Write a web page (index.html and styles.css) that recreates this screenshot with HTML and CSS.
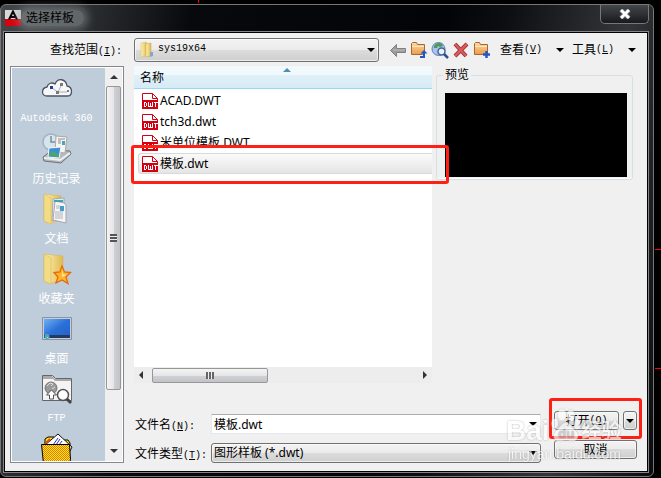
FILE: index.html
```html
<!DOCTYPE html>
<html lang="zh-CN">
    <head>
        <meta charset="utf-8">
        <meta name="viewport" content="width=device-width">
        <title>选择样板</title>
        <link rel="stylesheet" href="styles.css">
    </head>
    <body>
        <svg class="defs" width="0" height="0">
            <defs>
                <linearGradient id="yellow" x1="0" x2="1"><stop offset="0" stop-color="#fdf3b4"/><stop offset="1" stop-color="#dfb850"/></linearGradient>
                <linearGradient id="orange" x1="0" x2="0" y1="0" y2="1"><stop offset="0" stop-color="#ffd9a4"/><stop offset="1" stop-color="#e99b4b"/></linearGradient>
                <linearGradient id="sky" x1="0" x2="1" y1="0" y2="1"><stop offset="0" stop-color="#6fb0f4"/><stop offset=".5" stop-color="#2a70d8"/><stop offset="1" stop-color="#2360c8"/></linearGradient>
                <pattern id="check" width="2" height="2" patternUnits="userSpaceOnUse"><rect width="2" height="2" fill="#ffe81a"/><path d="M0 0h1v1H0zM1 1h1v1H1z" fill="#e07a00"/></pattern>
                <symbol id="dwt" viewBox="0 0 16 16">
                    <path d="M.5 8V.5h10l5 5V8" fill="#fff" stroke="#d4000f"/>
                    <path d="M10.500.5v5h5" fill="none" stroke="#d4000f"/>
                    <path d="M0 7h16v9H0z" fill="#d4000f"/>
                    <path d="M2.500 9v5M2 9.500h2M2 13.500h2M4.500 10v3M6.500 9v5M8.500 10v4M10.500 9v5M6 13.500h5M12 9.500h4M13.500 9v5" fill="none" stroke="#fff"/>
                </symbol>
                <symbol id="folder-up" viewBox="0 0 18 18">
                    <path d="M1.500 13.500v-11l1-1h4l1 2h7v10z" fill="url(#orange)" stroke="#a8682a"/>
                    <path d="M2 5.500h12" stroke="#ffe6c4"/>
                </symbol>
            </defs>
        </svg>
        <div class="dialog">
            <div class="title-bar">
                <svg class="app-icon" width="16" height="16" viewBox="0 0 16 16"><path d="M0 0h16v9H0z" fill="#d8d8d8"/><path d="M0 9h16v7H0z" fill="#d9000d"/><path d="M4 9.500L8 1.500l4 8M5.500 7h5" fill="none" stroke="#000" stroke-width="2"/></svg>
                <h1>选择样板</h1>
                <button class="close" aria-label="关闭"><svg width="12" height="10" viewBox="0 0 12 10"><path d="M2 1l8 8M10 1L2 9" stroke="#596070" stroke-width="5"/><path d="M2 1l8 8M10 1L2 9" stroke="#fff" stroke-width="3"/></svg></button>
            </div>
            <div class="client">
                <div class="toolbar">
                    <label for="look_in">查找范围<span class="lat">(<u>I</u>):</span></label>
                    <div class="look-in">
                        <svg width="16" height="18" viewBox="0 0 16 18"><path d="M2 2l5-1 1 1v13l-6 1z" fill="url(#yellow)" stroke="#d9bd62" stroke-width=".5"/><path d="M7 3l5-1v13l-5 1z" fill="url(#yellow)" stroke="#c9a844" stroke-width=".5"/><path d="M11 11h3v4l-3 1z" fill="#7fa9c9"/></svg>
                        <select id="look_in"><option>sys19x64</option></select>
                    </div>
                    <div class="tools">
                        <button aria-label="后退"><svg width="18" height="18" viewBox="0 0 18 18"><path d="M1.500 9.500l6-6v4h9v4h-9v4z" fill="#9c9c9c" stroke="#808080"/><path d="M4 9h12" stroke="#bdbdbd"/></svg></button>
                        <button aria-label="上一级"><svg width="18" height="18" viewBox="0 0 18 18"><use href="#folder-up"/><path d="M10 16h4v-5" fill="none" stroke="#2456c8" stroke-width="2"/><path d="M10.500 12.500L14 9l3.500 3.500z" fill="#2456c8"/></svg></button>
                        <button aria-label="搜索 Web"><svg width="18" height="18" viewBox="0 0 18 18"><circle cx="7.500" cy="8" r="6.500" fill="#a9c3ec" stroke="#5d7fbd"/><path d="M3 5c2-3 5-4 8-2l1 2-3 1-2-1-1 2-3 0z" fill="#4c9a57"/><circle cx="10.500" cy="10.500" r="3.500" fill="#e6f2ff" stroke="#46649c" stroke-width="1.500"/><path d="M13 13l4 4" stroke="#2d4f96" stroke-width="2.500"/></svg></button>
                        <button aria-label="删除"><svg width="18" height="18" viewBox="0 0 18 18"><path d="M3 3l11 12M15 3L3 15" stroke="#9c2a2c" stroke-width="4"/><path d="M3 3l11 12M15 3L3 15" stroke="#d9585b" stroke-width="2.500"/></svg></button>
                        <button aria-label="创建新文件夹"><svg width="18" height="18" viewBox="0 0 18 18"><use href="#folder-up"/><path d="M13.500 10v7M10 13.500h7" stroke="#2456c8" stroke-width="2.500"/></svg></button>
                    </div>
                    <button class="menu">查看<span class="lat">(<u>V</u>)</span><i class="arrow"></i></button>
                    <button class="menu">工具<span class="lat">(<u>L</u>)</span><i class="arrow"></i></button>
                </div>
                <div class="content">
                    <div class="places">
                        <nav>
                            <a href="#"><svg width="32" height="32" viewBox="0 0 32 32"><path d="M6 23c-6 0-6-8 0-9 1-4 5-5 8-3 3-7 11-5 12 2 6 1 6 10 0 10z" fill="#f6f7f9" stroke="#4c5463" stroke-width="1.300"/><path d="M11 15l6 4 3-6M17 19h9" stroke="#aab" fill="none"/><path d="M9 13h3v3H9z" fill="#283a9c"/><path d="M15 18h3v3h-3zM19 10h3v3h-3zM26 17h2v2h-2z" fill="#7a7a7a"/></svg><span class="lat">Autodesk 360</span></a>
                            <a href="#"><svg width="32" height="32" viewBox="0 0 32 32"><path d="M2 24l9-7 18 1 1 3-10 9-17-2z" fill="#b6babd" stroke="#6d7276"/><circle cx="10" cy="9" r="8" fill="#d6e4ec" stroke="#9fb2bf" stroke-width="1.500"/><path d="M10 3v6h4" fill="none" stroke="#7590a3" stroke-width="1.500"/><path d="M15 3l11 1-2 16-10-1z" fill="#f5f5f0" stroke="#a9aaa5"/><path d="M17 6h7M17 8h3M17 10h3" stroke="#889"/><path d="M21 8h3v4h-3z" fill="#54a0c4"/><path d="M8 15l12-1-2 11-11-1z" fill="#3f8ed3" stroke="#f4f8fb"/><path d="M8 21l4-3 6 4v2l-10-1z" fill="#4ca66b"/><path d="M3 25l16 2 10-7" fill="none" stroke="#edf0f1" stroke-width="2"/></svg><span>历史记录</span></a>
                            <a href="#"><svg width="32" height="32" viewBox="0 0 32 32"><path d="M3 1l17 2v24l-12 4-5-3z" fill="url(#yellow)" stroke="#d4b352" stroke-width=".5"/><path d="M12 6l11-1v21l-12 2z" fill="#e5eaf0" stroke="#8b9ba9" stroke-width=".7"/><path d="M14 8l9 2 2 2v18l-13-3z" fill="#f5f5f7" stroke="#a4a7ad"/><path d="M13 8h9" stroke="#43a4ad" stroke-width="2"/><path d="M15 13h4M15 15h4M14 19h8M14 21h8M14 23h8M14 25h8" stroke="#b1b2ba"/><path d="M19 13h4v5h-4z" fill="#479bc4"/><path d="M3 1l7 4v26l-7-3z" fill="#f3dc86" stroke="#d4b352" stroke-width=".5"/></svg><span>文档</span></a>
                            <a href="#"><svg width="32" height="32" viewBox="0 0 32 32"><path d="M3 1l19 2v23l-14 5-5-3z" fill="url(#yellow)" stroke="#d4b352" stroke-width=".5"/><path d="M3 1l7 4v26l-7-3z" fill="#f3dc86" stroke="#d4b352" stroke-width=".5"/><path d="M21 13l2.500 6 6 .5-4.500 4.500 2 6.500-6-3.500-6 3 2-6-4-4.500 6-.5z" fill="#ffb52e" stroke="#e36b0c" stroke-width="1.300"/><path d="M21 16l1 5 4 1-5 2z" fill="#ffe68b"/></svg><span>收藏夹</span></a>
                            <a href="#"><svg width="32" height="32" viewBox="0 0 32 32"><path d="M1.500 4.500h29v22h-29z" fill="#c9ced5" stroke="#8793a5"/><path d="M3 6h26v19H3z" fill="url(#sky)"/><path d="M3 22h26v3H3z" fill="#26395e"/><circle cx="6" cy="23.500" r="2.500" fill="#3caed0"/><path d="M5 22h1v1H5z" fill="#e66629"/><path d="M6 24h1v1H6z" fill="#f6d83a"/></svg><span>桌面</span></a>
                            <a href="#"><svg width="32" height="32" viewBox="0 0 32 32"><path d="M1.500 27.500v-25h10l3 3h16v22z" fill="#f4f4f4" stroke="#666"/><path d="M2 3h9l3 3h16v2H14l-2-2H2z" fill="#aaa"/><circle cx="10" cy="15" r="6" fill="#9a9a9a" stroke="#777"/><path d="M6 13l3-3 3 1-2 2M11 16l3-2" stroke="#ddd" fill="none"/><path d="M10.500 17l5 5h-3v4h-4v-4h-3z" fill="#fff" stroke="#555"/><circle cx="22" cy="22" r="5.500" fill="#fff" stroke="#555" stroke-width="1.500"/><path d="M26 26l4 4" stroke="#444" stroke-width="3"/></svg><span class="lat">FTP</span></a>
                            <a href="#"><svg width="32" height="32" viewBox="0 0 32 32"><path d="M4 12V6l3-2h6l2 3h12l2 3v6H4z" fill="#ffe600" stroke="#000"/><path d="M4 12L17 1l14 13-4 8H6z" fill="#fff" stroke="#111"/><path d="M12 12l5-7M15 12l4-6M18 12l3-4" stroke="#2430d0"/><path d="M5 10l4-4" stroke="#ea4427" stroke-width="2"/><path d="M.5 11.500h28l1 15-1 4h-26z" fill="url(#check)" stroke="#000"/></svg></a>
                        </nav>
                        <div class="vscroll"><i class="tri up"></i><div class="vthumb"><i class="grip"></i></div><i class="tri down"></i></div>
                    </div>
                    <div class="main">
                        <div class="upper">
                            <div class="files">
                                <div class="col-head">名称<i></i></div>
                                <ul class="file-list">
                                    <li><svg width="16" height="16"><use href="#dwt"/></svg>ACAD.DWT</li>
                                    <li><svg width="16" height="16"><use href="#dwt"/></svg>tch3d.dwt</li>
                                    <li><svg width="16" height="16"><use href="#dwt"/></svg>米单位模板.DWT</li>
                                    <li class="selected"><svg width="16" height="16"><use href="#dwt"/></svg>模板.dwt</li>
                                </ul>
                                <div class="hscroll"><i class="tri left"></i><div class="hthumb"><i class="grip"></i></div><i class="tri right"></i></div>
                                <div class="mark mark-file"></div>
                            </div>
                            <fieldset class="preview">
                                <legend>预览</legend>
                                <div class="preview-box"></div>
                            </fieldset>
                        </div>
                        <form class="form">
                            <div class="fields">
                                <label for="file_name">文件名<span class="lat">(<u>N</u>):</span></label>
                                <input type="text" id="file_name" value="模板.dwt">
                                <label for="file_type">文件类型<span class="lat">(<u>T</u>):</span></label>
                                <select id="file_type"><option>图形样板 (*.dwt)</option></select>
                            </div>
                            <div class="buttons">
                                <button type="button" class="btn">打开<span class="lat">(<u>O</u>)</span></button>
                                <button type="button" class="btn more" aria-label="打开选项"><i class="arrow"></i></button>
                                <button type="button" class="btn cancel">取消</button>
                                <div class="mark mark-open"></div>
                                <div class="watermark">
                                    <div class="brand"><span>Bai</span><svg width="40" height="42" viewBox="0 0 40 42"><g fill="#fff"><ellipse cx="6" cy="18" rx="4" ry="6"/><ellipse cx="15" cy="7" rx="5" ry="7"/><ellipse cx="26" cy="8" rx="5" ry="7"/><ellipse cx="34" cy="19" rx="4" ry="6"/><path d="M20 17c5 0 7 6 12 10 6 6 2 14-5 13-5-1-9-1-14 0-8 1-11-7-5-13 5-4 7-10 12-10z"/></g><text x="10" y="36" class="du">du</text></svg><span class="jingyan">经验</span></div>
                                    <div class="site">jingyan.baidu.com</div>
                                </div>
                            </div>
                        </form>
                    </div>
                </div>
            </div>
        </div>
    </body>
</html>
```
FILE: styles.css
```css
*{
    box-sizing:border-box;
}
body{
    margin:0;
    min-height:100vh;
    padding:4px 7px 1px 0;
    display:flex;
    /* drawing lines that show behind the dialog */
    background:
        linear-gradient(#f00,#f00) 198px 0 / 1px 3px no-repeat,
        linear-gradient(#f00,#f00) right 249px / 6px 1px no-repeat,
        linear-gradient(#f00,#f00) right 368px / 6px 1px no-repeat,
        #000;
    font:12px/16px "Noto Sans","Noto Sans CJK SC",sans-serif;
    color:#000;
}
.defs{
    position:absolute;
}
button,input,select{
    font:inherit;
    color:inherit;
    margin:0;
    padding:0;
}
button{
    background:none;
    border:0;
    white-space:nowrap;
}
.lat{
    font-family:"Liberation Mono",monospace;
    font-size:10px;
}
.dialog{
    flex:1;
    display:flex;
    flex-direction:column;
    border:1px solid #777;
    border-radius:6px;
    background:linear-gradient(100deg,#44484c 0,#2a2d30 90px,#08090c 190px,#030408 440px,#0c0e12 500px,#34363a 620px,#0a0b0e 100%);
}
.title-bar{
    display:flex;
    height:27px;
    padding-left:4px;
}
.app-icon{
    margin:5px 0 0 0;
}
.title-bar h1{
    margin:5px 0 0 0;
    padding:0 10px 0 5px;
    font-size:12px;
    font-weight:normal;
    height:16px;
    border-radius:8px;
    background:rgba(150,155,158,.5);
    box-shadow:0 0 8px 4px rgba(150,155,158,.5);
}
.close{
    margin:0 4px 0 auto;
    width:49px;
    height:19px;
    border:1px solid #777;
    border-top:0;
    border-radius:0 0 5px 5px;
    background:linear-gradient(#44474b,#17191c);
    display:flex;
    align-items:center;
    justify-content:center;
}
.client{
    flex:1;
    margin:0 5px 4px 3px;
    padding:5px 10px 8px 5px;
    border:1px solid #000;
    box-shadow:0 0 0 1px #858585;
    background:#f0f0f0;
    display:flex;
    flex-direction:column;
}
.toolbar{
    display:flex;
    align-items:center;
    margin-bottom:4px;
}
.toolbar label{
    flex:none;
    width:124px;
    padding:2px 12px 0 0;
    text-align:right;
}
.look-in{
    flex:none;
    width:245px;
    height:24px;
    padding-left:4px;
    display:flex;
    align-items:center;
    gap:3px;
}
.look-in,.form select,.btn{
    border:1px solid #707070;
    border-radius:3px;
    background:linear-gradient(#f3f3f3,#ebebeb 50%,#dcdcdc 50%,#cfcfcf);
    box-shadow:inset 0 0 0 1px rgba(255,255,255,.6);
}
select,#file_name{
    appearance:none;
    flex:1;
    height:20px;
    min-width:0;
    border:0;
    background:url("data:image/svg+xml,%3Csvg xmlns='http://www.w3.org/2000/svg' width='8' height='4'%3E%3Cpath d='M0 0h8L4 4z'/%3E%3C/svg%3E") right 3px center no-repeat;
}
#look_in{
    padding-bottom:2px;
    font:10px/16px "Liberation Mono",monospace;
}
.tools{
    display:flex;
    gap:3px;
    margin:0 9px 0 10px;
}
.tools svg{
    display:block;
}
.menu{
    display:flex;
    align-items:center;
    height:20px;
}
.menu + .menu{
    margin-left:8px;
}
.arrow{
    border:4px solid transparent;
    border-top-color:#000;
    border-bottom:0;
}
.menu .arrow{
    margin-left:14px;
}
.content{
    flex:1;
    display:flex;
    gap:10px;
}
.places{
    width:114px;
    display:flex;
    border:1px solid #828790;
    padding:1px;
    background:#fff;
}
/* height comes from the dialog, the last icon is cut off */
.places nav{
    flex:1;
    height:0;
    min-height:100%;
    overflow:hidden;
    background:#bfcddb;
    padding:5px 4px 0 0;
}
.places a{
    display:flex;
    flex-direction:column;
    align-items:center;
    height:60px;
    gap:6px;
    color:#fff;
    text-decoration:none;
}
.places a svg{
    flex:none;
}
.places span{
    line-height:16px;
}
.vscroll{
    width:17px;
    padding:7px 1px 8px 1px;
    background:#efefef;
    display:flex;
    flex-direction:column;
    align-items:center;
}
.vthumb,.hthumb{
    border:1px solid #979797;
    border-radius:2px;
    display:flex;
    align-items:center;
    justify-content:center;
}
.vthumb{
    width:15px;
    height:304px;
    margin:7px 0 auto;
    background:linear-gradient(90deg,#f4f4f4,#e6e6e8 50%,#cfd0d3 55%,#c3c4c8);
}
.vthumb .grip{
    width:7px;
    height:8px;
    background:repeating-linear-gradient(#555 0 2px,#eee 2px 3px);
}
.hthumb .grip{
    width:8px;
    height:7px;
    background:repeating-linear-gradient(90deg,#666 0 2px,#eee 2px 3px);
}
.tri{
    border:4px solid transparent;
}
.tri.up{
    border-top:0;
    border-bottom-color:#333;
}
.tri.down{
    border-bottom:0;
    border-top-color:#333;
}
.tri.left{
    border-left:0;
    border-right-color:#333;
}
.tri.right{
    border-right:0;
    border-left-color:#333;
}
.main{
    flex:1;
    display:flex;
    flex-direction:column;
}
.upper{
    flex:1;
    display:flex;
    align-items:stretch;
    gap:4px;
    padding-right:4px;
}
.files{
    position:relative;
    flex:1;
    display:flex;
    flex-direction:column;
    background:#fff;
}
.col-head{
    height:23px;
    padding:4px 6px;
    border-bottom:1px solid #96d9f9;
    background:linear-gradient(#f2f9fd 40%,#dff0f8 40%,#d8ebf5);
    display:flex;
    position:relative;
}
.col-head i{
    position:absolute;
    top:2px;
    left:50%;
    border:4px solid transparent;
    border-top:0;
    border-bottom-color:#4f8fb0;
}
.file-list{
    flex:1;
    list-style:none;
    margin:0;
    padding:1px 0 0 4px;
}
.file-list li{
    display:flex;
    align-items:center;
    gap:2px;
    height:21px;
    padding-left:4px;
}
.file-list .selected{
    padding-left:3px;
    border:1px solid #d9d9d9;
    border-right:0;
    border-radius:3px 0 0 3px;
    background:linear-gradient(#fafafa,#e5e5e5);
}
.hscroll{
    height:16px;
    padding:0 5px 0 5px;
    background:#ededed;
    display:flex;
    align-items:center;
    justify-content:space-between;
}
.hthumb{
    width:116px;
    height:15px;
    margin:0 auto 0 9px;
    background:linear-gradient(#f4f4f4,#e6e6e8 50%,#cfd0d3 55%,#c3c4c8);
}
.mark{
    position:absolute;
    border:3px solid #ff2015;
    border-radius:3px;
    pointer-events:none;
}
.mark-file{
    top:79px;
    left:-3px;
    right:-17px;
    height:39px;
}
.preview{
    align-self:flex-start;
    width:197px;
    margin:0;
    padding:9px 5px 2px 8px;
    border:1px solid #d5dfe5;
    border-radius:3px;
    box-shadow:inset 0 -1px #fff;
}
.preview legend{
    padding:0 2px;
    margin-left:-2px;
    line-height:18px;
}
.preview-box{
    height:84px;
    background:#000;
}
.form{
    display:flex;
    gap:13px;
    padding-top:27px;
}
.fields{
    flex:1;
    display:grid;
    grid-template-columns:77px 1fr;
    grid-template-rows:20px 20px;
    align-items:center;
    row-gap:9px;
    padding-top:4px;
}
.fields label{
    padding:4px 0 0 1px;
    white-space:nowrap;
}
.fields input,.fields select{
    width:100%;
    padding:0 2px;
}
.fields #file_name{
    border:1px solid #e3e9ef;
    border-top-color:#abadb3;
    background-color:#fff;
}
.form select{
    background:
        url("data:image/svg+xml,%3Csvg xmlns='http://www.w3.org/2000/svg' width='8' height='4'%3E%3Cpath d='M0 0h8L4 4z'/%3E%3C/svg%3E") right 3px center no-repeat,
        linear-gradient(#f3f3f3,#ebebeb 50%,#dcdcdc 50%,#cfcfcf);
}
.buttons{
    position:relative;
    width:83px;
    display:grid;
    grid-template-columns:1fr 14px;
    grid-template-rows:19px 19px;
    gap:10px 4px;
    padding-top:1px;
}
.btn{
    display:flex;
    align-items:center;
    justify-content:center;
}
.cancel{
    grid-column:span 2;
}
.mark-open{
    top:-12px;
    left:-5px;
    right:-5px;
    height:41px;
}
.watermark{
    position:absolute;
    top:-4px;
    left:-48px;
    width:124px;
    opacity:.65;
    color:#fff;
    pointer-events:none;
    text-shadow:0 0 2px #888;
    font-family:"Liberation Sans","Noto Sans CJK SC",sans-serif;
}
.brand{
    display:flex;
    align-items:center;
    height:40px;
    font-size:28px;
    font-weight:bold;
    line-height:40px;
}
.brand > span{
    padding-top:10px;
}
.brand .jingyan{
    font-size:20px;
}
.brand svg{
    flex:none;
    width:32px;
    height:36px;
    filter:drop-shadow(0 0 1px #aaa);
}
.du{
    font-size:17px;
    fill:#bbb;
}
.site{
    font-size:14px;
    line-height:16px;
    padding-left:2px;
}
```
